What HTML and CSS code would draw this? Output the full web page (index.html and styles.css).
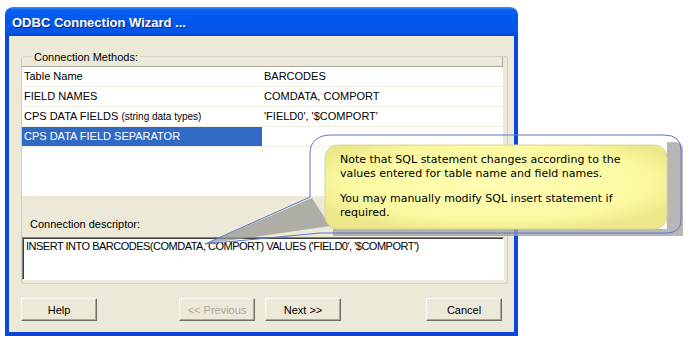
FILE: index.html
```html
<!DOCTYPE html>
<html>
<head>
    <title>ODBC Connection Wizard</title>
    <link rel="stylesheet" href="styles.css">
</head>
<body>
    <div class="window">
        <div class="titlebar">ODBC Connection Wizard ...</div>
        <div class="client">
            <div class="group">
                <div class="group-head">
                    <div class="list-header"></div>
                    <span class="legend">Connection Methods:</span>
                </div>
                <div class="list">
                    <div class="row">
                        <span class="cell">Table Name</span>
                        <span class="cell">BARCODES</span>
                    </div>
                    <div class="row">
                        <span class="cell">FIELD NAMES</span>
                        <span class="cell">COMDATA, COMPORT</span>
                    </div>
                    <div class="row">
                        <span class="cell">CPS DATA FIELDS <small>(string data types)</small></span>
                        <span class="cell">'FIELD0', '$COMPORT'</span>
                    </div>
                    <div class="row">
                        <span class="cell selected">CPS DATA FIELD SEPARATOR</span>
                        <span class="cell"></span>
                    </div>
                </div>
                <div class="label">Connection descriptor:</div>
                <div class="descriptor">INSERT INTO BARCODES(COMDATA, COMPORT) VALUES ('FIELD0', '$COMPORT')</div>
            </div>

            <div class="buttons">
                <button class="btn">Help</button>
                <button class="btn btn-prev" disabled>&lt;&lt; Previous</button>
                <button class="btn btn-next">Next &gt;&gt;</button>
                <button class="btn btn-cancel">Cancel</button>
            </div>
        </div>
    </div>

    <svg class="callout-shape" width="693" height="338" viewBox="0 0 693 338">
        <defs>
            <radialGradient id="note" cx="50%" cy="45%" r="60%">
                <stop offset="0%" stop-color="#ffffb4"/>
                <stop offset="75%" stop-color="#fbf8a0"/>
                <stop offset="100%" stop-color="#ece78a"/>
            </radialGradient>
        </defs>
        <path d="M205 244 L312 198 L330 226 Z" fill="#9a9a96" opacity="0.75"/>
        <path d="M333 236 L683 236 L683 150 Q683 142 675 142 L667 142 L667 229 L333 229 Z" fill="#a4a4a0" opacity="0.8"/>
        <rect x="325" y="145" width="342" height="84" rx="13" fill="url(#note)" stroke="#d8d49a" stroke-width="1"/>
        <path d="M205 244 L310 197 L310 154 Q310 135 332 135 L664 135 Q681 135 681 150 L681 220 Q681 233 666 233 L320 233 Z"
              fill="none" stroke="#5b76d0" stroke-width="1"/>
    </svg>
    <div class="callout-text">
        <p>Note that SQL statement changes according to the<br>values entered for table name and field names.</p>
        <p>You may manually modify SQL insert statement if<br>required.</p>
    </div>
</body>
</html>
```

FILE: styles.css
```css
body {
    margin: 0;
    background: #fff;
    font-family: "Liberation Sans", Arial, sans-serif;
    font-size: 11px;
    color: #000;
}

.window {
    margin: 7px 0 0 5px;
    width: 513px;
}

.titlebar {
    height: 29px;
    box-sizing: border-box;
    padding: 8px 0 0 7px;
    border-radius: 8px 8px 0 0;
    background: linear-gradient(#3d95ff 0, #0a5ff0 3px, #0058ee 45%, #0854e5 85%, #0247d8 100%);
    color: #fff;
    font-weight: bold;
    font-size: 13px;
    line-height: 16px;
    text-shadow: 1px 1px 0 #0a2a8a;
}

.client {
    background: #ece9d8;
    border: 4px solid #0a45dc;
    border-top: 0;
    padding: 20px 6px 11px 12px;
}

.group {
    border: 1px solid #d0d0bf;
    border-radius: 3px;
    padding: 0 4px 3px 0;
}

.group-head {
    display: grid;
}

.list-header,
.legend {
    grid-area: 1 / 1;
}

.list-header {
    height: 9px;
    background: #ebeadb;
    border-bottom: 1px solid #aca899;
    border-right: 1px solid #aca899;
}

.legend {
    justify-self: start;
    margin: -6px 0 0 10px;
    padding: 0 2px;
    background: #ece9d8;
    line-height: 13px;
    height: 13px;
}

.list {
    background: #fff;
    height: 129px;
}

.row {
    display: grid;
    grid-template-columns: 240px 1fr;
    height: 20px;
}

.cell {
    border-bottom: 1px solid #f1efe2;
    padding-left: 2px;
    line-height: 19px;
    white-space: nowrap;
}

.cell small {
    font-size: 10px;
}

.selected {
    background: #316ac5;
    color: #fff;
}

.label {
    margin: 22px 0 6px 8px;
    line-height: 13px;
}

.descriptor {
    height: 37px;
    margin-right: -1px;
    padding: 2px 3px;
    background: #fff;
    border-top: 1px solid #808080;
    border-left: 1px solid #808080;
    border-right: 1px solid #fff;
    border-bottom: 1px solid #fff;
    box-shadow: inset 1px 1px 0 #404040;
    line-height: 13px;
    letter-spacing: -0.5px;
    white-space: nowrap;
}

.buttons {
    display: flex;
    margin-top: 14px;
}

.btn {
    width: 76px;
    height: 23px;
    padding: 0;
    font-family: inherit;
    font-size: 11px;
    color: #000;
    background: #ece9d8;
    border: 1px solid;
    border-color: #fff #716f64 #716f64 #fff;
    box-shadow: inset -1px -1px 0 #aca899;
}

.btn:disabled {
    color: #aca899;
}

.btn-prev { margin-left: 82px; }
.btn-next { margin-left: 10px; }
.btn-cancel { margin-left: 85px; }

.callout-shape {
    position: absolute;
    left: 0;
    top: 0;
    pointer-events: none;
}

.callout-text {
    position: absolute;
    left: 340px;
    top: 153px;
    font-family: "DejaVu Sans", Verdana, sans-serif;
    font-size: 11px;
    line-height: 14px;
    color: #000;
    white-space: nowrap;
}

.callout-text p {
    margin: 0 0 11px 0;
}
```
